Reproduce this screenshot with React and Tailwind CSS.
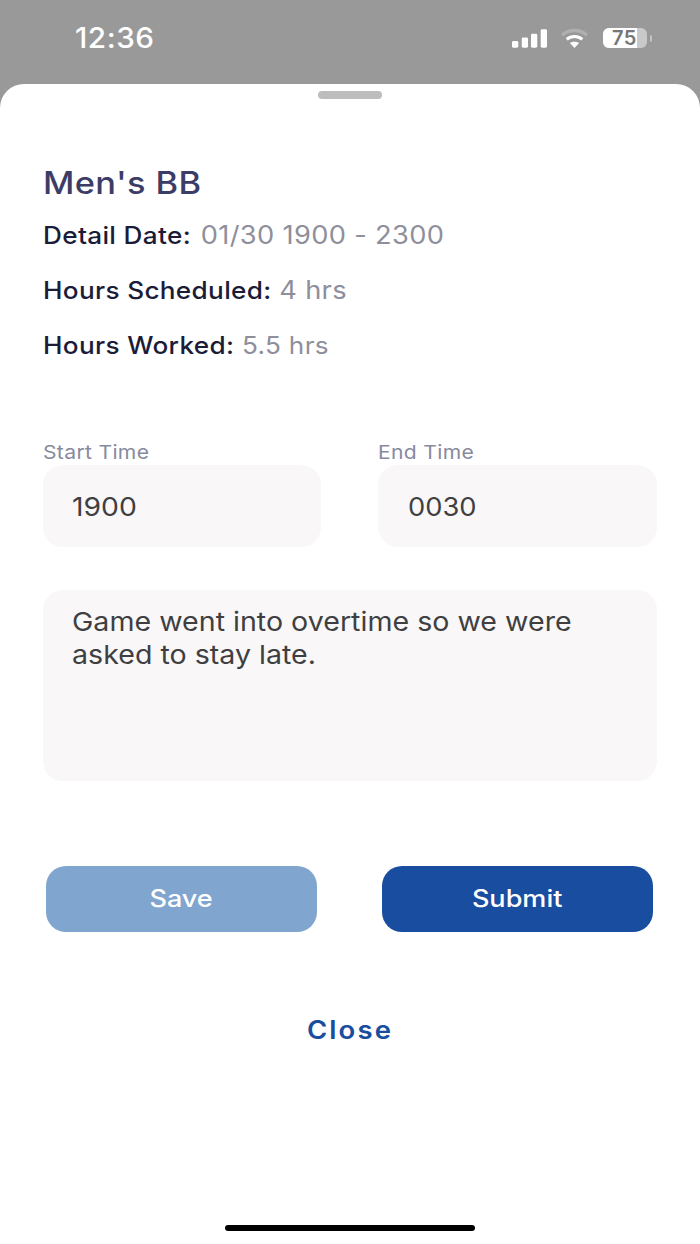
export default function App() {
  return (
    <div className="w-[700px] h-[1244px] bg-[#999999] flex flex-col overflow-hidden font-['Inter',sans-serif]">
      <div className="h-[84px] shrink-0 flex items-start justify-between pl-[75px] pr-[48px] pt-[22px]">
        <span className="inline-block origin-left scale-x-[1.06] text-[28px] leading-[33px] font-medium text-white tracking-[0.5px]">12:36</span>
        <div className="flex items-center h-[32px]">
          <svg width="35" height="20" viewBox="0 0 36 20">
            <rect x="0" y="13" width="6.5" height="7" rx="1.5" fill="#fff" />
            <rect x="10" y="9.5" width="6.5" height="10.5" rx="1.5" fill="#fff" />
            <rect x="19.5" y="5.5" width="6.5" height="14.5" rx="1.5" fill="#fff" />
            <rect x="29.5" y="1" width="6.5" height="19" rx="1.5" fill="#fff" />
          </svg>
          <svg width="29" height="21" viewBox="0 0 30 22" className="ml-[13px]">
            <path d="M2 7.5C9 1 21 1 28 7.5" stroke="#b0b0b0" strokeWidth="3.6" fill="none" />
            <path d="M6.8 12C11.5 8 18.5 8 23.2 12" stroke="#fff" strokeWidth="3.2" fill="none" />
            <path d="M15 21L10.2 15.8C12.8 13.8 17.2 13.8 19.8 15.8Z" fill="#fff" />
          </svg>
          <div className="ml-[14px] flex items-center gap-[3px]">
            <div className="relative w-[44px] h-[20px] rounded-[6px] bg-[#c9c9c9] flex items-center pl-[9px]">
              <div className="absolute left-0 top-0 bottom-0 w-[34px] rounded-l-[6px] bg-white" />
              <span className="relative text-[20px] leading-[20px] font-semibold text-[#777777] tracking-[0.5px]">75</span>
            </div>
            <div className="w-[2px] h-[7px] rounded-r-full bg-[#c4c4c4]" />
          </div>
        </div>
      </div>

      <div className="relative flex-1 bg-white rounded-t-[24px] flex flex-col px-[43px]">
        <div className="w-[64px] h-[8px] rounded-full bg-[#bdbdbd] self-center mt-[7px]" />

        <h1 className="mt-[64px] origin-left scale-x-[1.11] text-[31px] leading-[40px] font-medium text-[#3c3d66] tracking-[0.3px]">Men's BB</h1>

        <div className="mt-[16px] flex flex-col gap-[22px] text-[24px] leading-[32px] tracking-[0.3px] origin-left scale-x-[1.09]">
          <p>
            <span className="font-medium text-[#1b1c38]">Detail Date:</span>{" "}
            <span className="ml-[2px] text-[25px] text-[#8e8f9b]">01/30 1900 - 2300</span>
          </p>
          <p>
            <span className="font-medium text-[#1b1c38]">Hours Scheduled:</span>{" "}
            <span className="text-[25px] text-[#8e8f9b]">4 hrs</span>
          </p>
          <p className="mt-[1px]">
            <span className="font-medium text-[#1b1c38]">Hours Worked:</span>{" "}
            <span className="text-[24px] text-[#8e8f9b]">5.5 hrs</span>
          </p>
        </div>

        <div className="mt-[78px] grid grid-cols-[278px_279px] gap-x-[57px]">
          <div className="flex flex-col">
            <label className="origin-left scale-x-[1.11] text-[19px] leading-[24px] pt-[1px] text-[#878a9e] tracking-[0.3px]">Start Time</label>
            <div className="h-[82px] rounded-[20px] bg-[#f9f7f8] flex items-center pl-[29px] text-[26px] text-[#3f3f42]">
              <span className="origin-left scale-x-[1.09]">1900</span>
            </div>
          </div>
          <div className="flex flex-col">
            <label className="origin-left scale-x-[1.11] text-[19px] leading-[24px] pt-[1px] text-[#878a9e] tracking-[0.3px]">End Time</label>
            <div className="h-[82px] rounded-[20px] bg-[#f9f7f8] flex items-center pl-[30px] text-[26px] text-[#3f3f42]">
              <span className="origin-left scale-x-[1.05]">0030</span>
            </div>
          </div>
        </div>

        <div className="mt-[43px] h-[191px] rounded-[20px] bg-[#f9f7f8] px-[29px] pt-[15px] text-[26px] leading-[33px] text-[#3f3f42]">
          <p className="origin-left scale-x-[1.1] whitespace-nowrap">Game went into overtime so we were<br />asked to stay late.</p>
        </div>

        <div className="mt-[85px] pl-[3px] pr-[4px] flex justify-between">
          <button className="w-[271px] h-[66px] rounded-[20px] bg-[#80a5ce] text-white text-[24px] font-medium">
            <span className="inline-block scale-x-[1.127]">Save</span>
          </button>
          <button className="w-[271px] h-[66px] rounded-[20px] bg-[#194da0] text-white text-[24px] font-medium">
            <span className="inline-block scale-x-[1.127]">Submit</span>
          </button>
        </div>

        <div className="mt-[82px] scale-x-[1.1] text-center text-[25px] leading-[32px] font-semibold tracking-[1.9px] text-[#194da0]">Close</div>

        <div className="absolute bottom-[13px] left-[225px] w-[250px] h-[6px] rounded-full bg-black" />
      </div>
    </div>
  );
}
